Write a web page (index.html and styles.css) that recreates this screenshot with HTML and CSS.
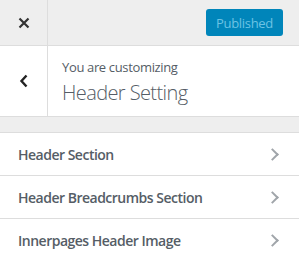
FILE: index.html
```html
<!DOCTYPE html>
<html>
<head>
  <title>Customizer</title>
  <link rel="stylesheet" href="styles.css">
</head>
<body>
  <div class="topbar">
    <div class="close">
      <svg width="12" height="12" viewBox="0 0 12 12"><path d="M1.5 1.5 L10.5 10.5 M10.5 1.5 L1.5 10.5" stroke="#333" stroke-width="2.2" fill="none"/></svg>
    </div>
    <button class="publish">Published</button>
  </div>

  <div class="info">
    <div class="back">
      <svg width="10" height="14" viewBox="0 0 10 14"><path d="M7.5 1.5 L2.5 7 L7.5 12.5" stroke="#222" stroke-width="2.4" fill="none"/></svg>
    </div>
    <div class="title">
      <span class="small">You are customizing</span>
      <span class="big">Header Setting</span>
    </div>
  </div>

  <ul class="sections">
    <li>Header Section <span class="arrow"></span></li>
    <li>Header Breadcrumbs Section <span class="arrow"></span></li>
    <li>Innerpages Header Image <span class="arrow"></span></li>
  </ul>
</body>
</html>
```

FILE: styles.css
```css
body {
  margin: 0;
  background: #eeeeee;
  font-family: "Open Sans", "Noto Sans", sans-serif;
  color: #555d66;
}

.topbar {
  display: flex;
  align-items: center;
  height: 45px;
  border-bottom: 1px solid #dddddd;
}

.close {
  width: 47px;
  height: 45px;
  display: flex;
  align-items: center;
  justify-content: center;
  border-right: 1px solid #dddddd;
}

.publish {
  margin-left: auto;
  margin-right: 16px;
  width: 77px;
  height: 27px;
  padding: 0;
  border: none;
  border-radius: 3px;
  background: #0085ba;
  color: #6cc3e4;
  font-family: "Open Sans", "Noto Sans", sans-serif;
  font-size: 13px;
  letter-spacing: -0.3px;
}

.info {
  display: flex;
  height: 70px;
  background: #ffffff;
  border-bottom: 1px solid #dddddd;
}

.back {
  width: 47px;
  display: flex;
  align-items: center;
  justify-content: center;
  border-right: 1px solid #dddddd;
}

.title {
  display: flex;
  flex-direction: column;
  justify-content: center;
  padding-left: 14px;
  padding-top: 2px;
}

.small {
  font-size: 13px;
  line-height: 18px;
  letter-spacing: -0.35px;
}

.big {
  margin-top: 3px;
  font-size: 20px;
  font-weight: 300;
  line-height: 28px;
  letter-spacing: -0.6px;
  color: #555d66;
}

.sections {
  list-style: none;
  margin: 15px 0 0;
  padding: 0;
  border-top: 1px solid #dddddd;
}

.sections li {
  display: flex;
  align-items: center;
  height: 42px;
  padding: 0 18px;
  background: #ffffff;
  border-bottom: 1px solid #dddddd;
  font-size: 14px;
  font-weight: 600;
  letter-spacing: -0.5px;
  color: #555d66;
}

.arrow {
  margin-left: auto;
  margin-right: 4px;
  width: 7px;
  height: 7px;
  border-top: 2px solid #a0a5aa;
  border-right: 2px solid #a0a5aa;
  transform: rotate(45deg);
}
```
